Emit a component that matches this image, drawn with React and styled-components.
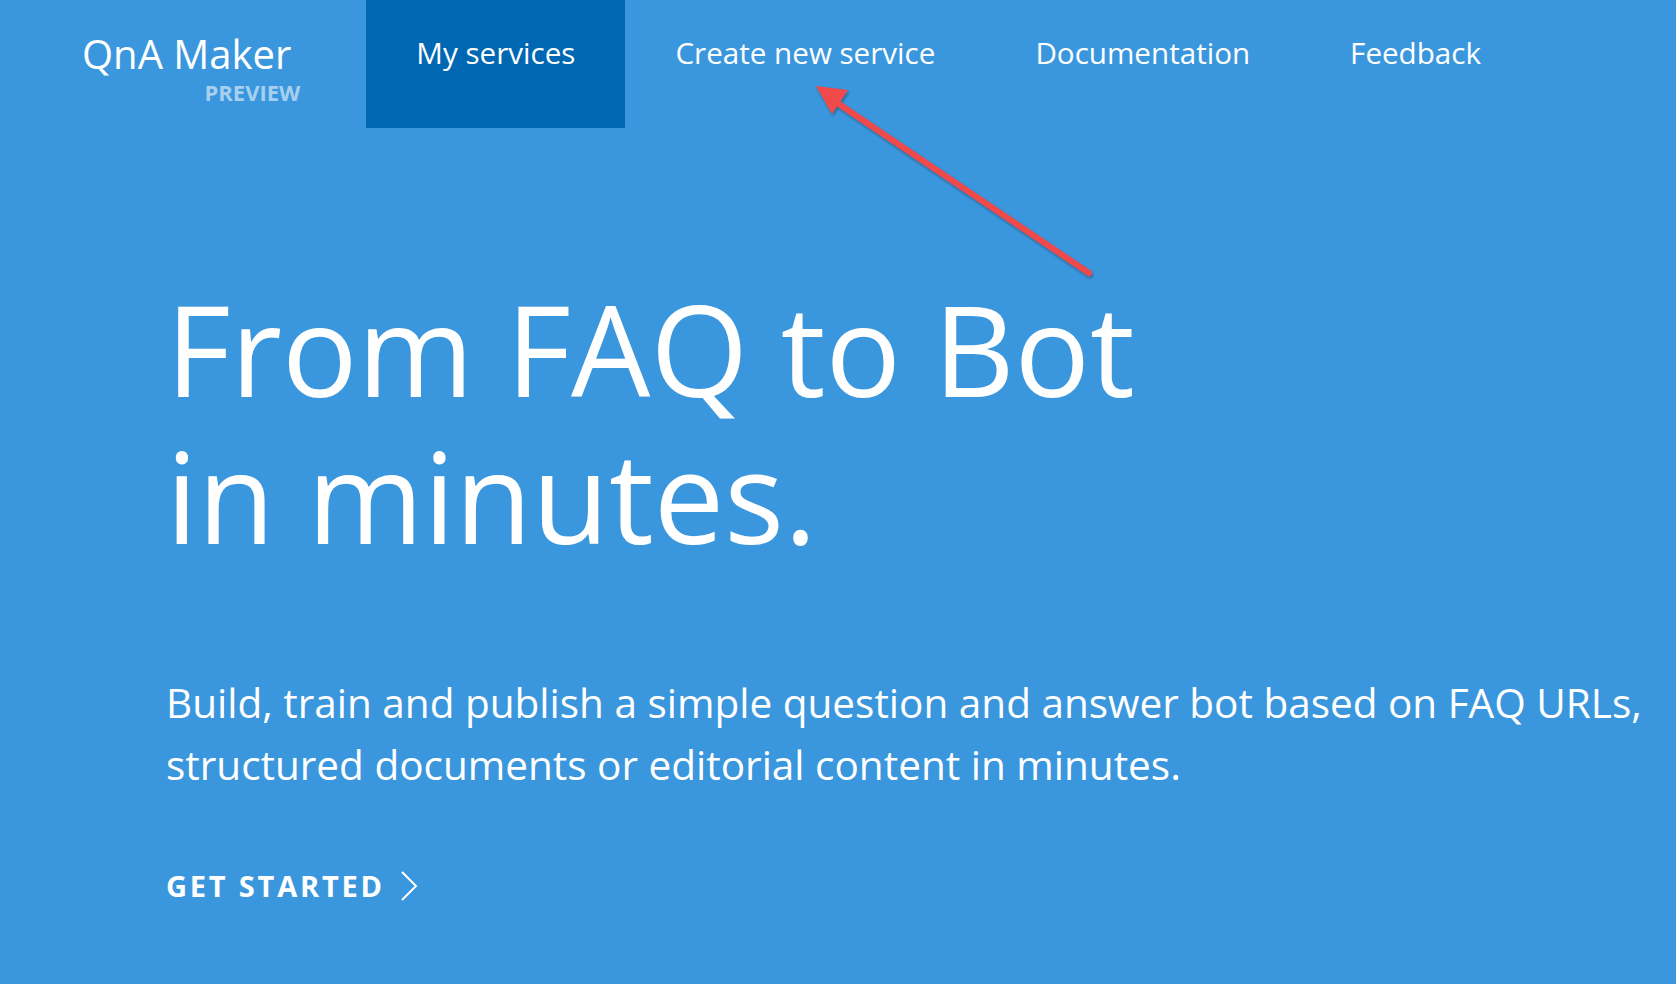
import React from "react";
import styled, { createGlobalStyle } from "styled-components";

const Global = createGlobalStyle`
  html, body {
    margin: 0;
    padding: 0;
    background: #3b97dd;
  }
  body {
    font-family: "Open Sans", "Noto Sans", sans-serif;
    color: #ffffff;
  }
`;

const Page = styled.div`
  position: relative;
  width: 1676px;
  height: 984px;
  overflow: hidden;
  background: #3b97dd;
`;

const Header = styled.header`
  display: flex;
  align-items: flex-start;
  height: 128px;
`;

const Logo = styled.div`
  display: flex;
  flex-direction: column;
  align-items: flex-end;
  padding: 30px 0 0 82px;
  margin-right: 66px;
`;

const LogoTitle = styled.div`
  font-size: 40px;
  line-height: 48px;
  white-space: nowrap;
  margin-right: 9px;
`;

const LogoTag = styled.div`
  margin-top: 2px;
  font-size: 22px;
  line-height: 24px;
  font-weight: 700;
  color: #a6cff0;
`;

const Nav = styled.nav`
  display: flex;
`;

const NavItem = styled.a`
  display: block;
  height: 128px;
  box-sizing: border-box;
  padding: 35px 50px 0;
  font-size: 29.6px;
  line-height: 36px;
  white-space: nowrap;
  color: #ffffff;
  text-decoration: none;
  background: ${(p) => (p.$active ? "#0067b3" : "transparent")};
`;

const Hero = styled.main`
  padding: 147px 0 0 166px;
`;

const Headline = styled.h1`
  margin: 0;
  font-size: 125.5px;
  line-height: 147px;
  font-weight: 400;
`;

const Lead = styled.p`
  margin: 103px 0 0;
  font-size: 40.5px;
  line-height: 62px;
  white-space: nowrap;
`;

const Cta = styled.a`
  display: inline-flex;
  align-items: center;
  gap: 15px;
  margin-top: 72px;
  font-size: 29px;
  line-height: 36px;
  font-weight: 700;
  letter-spacing: 2.8px;
  color: #ffffff;
  text-decoration: none;
`;

const Annotation = styled.svg`
  position: absolute;
  left: 0;
  top: 0;
  pointer-events: none;
`;

const Chevron = () => (
  <svg width="18" height="30" viewBox="0 0 18 30">
    <path d="M2 1 L16 15 L2 29" fill="none" stroke="#fff" strokeWidth="2" />
  </svg>
);

const links = ["My services", "Create new service", "Documentation", "Feedback"];

const App = () => {
  return (
    <Page>
      <Global />
      <Header>
        <Logo>
          <LogoTitle>QnA Maker</LogoTitle>
          <LogoTag>PREVIEW</LogoTag>
        </Logo>
        <Nav>
          {links.map((l, i) => (
            <NavItem key={l} $active={i === 0}>
              {l}
            </NavItem>
          ))}
        </Nav>
      </Header>
      <Hero>
        <Headline>
          From FAQ to Bot
          <br />
          in minutes.
        </Headline>
        <Lead>
          Build, train and publish a simple question and answer bot based on FAQ URLs,
          <br />
          structured documents or editorial content in minutes.
        </Lead>
        <Cta>
          GET STARTED <Chevron />
        </Cta>
      </Hero>
      <Annotation width="1676" height="984">
        <defs>
          <filter id="sh" x="-20%" y="-20%" width="140%" height="140%">
            <feDropShadow dx="1" dy="2" stdDeviation="1.5" floodColor="#000" floodOpacity="0.35" />
          </filter>
        </defs>
        <g filter="url(#sh)">
          <line x1="1089" y1="273" x2="830" y2="98" stroke="#f0484a" strokeWidth="6" strokeLinecap="round" />
          <polygon points="816,86 848,90 832,114" fill="#f0484a" />
        </g>
      </Annotation>
    </Page>
  );
};

export default App;
